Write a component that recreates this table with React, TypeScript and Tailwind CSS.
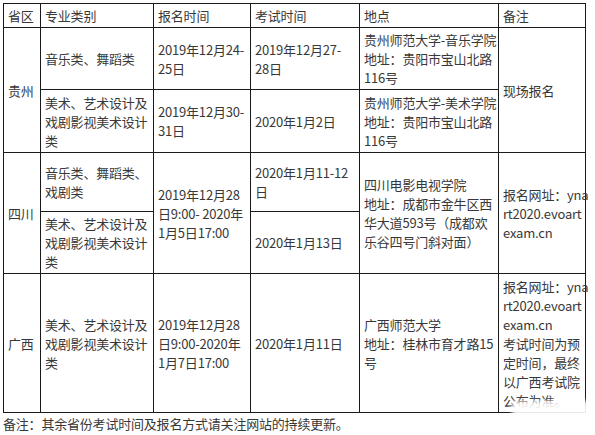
import React from 'react'

// ─── Exam schedule table ──────────────────────────────────────────────────

const td = 'border border-[#1a1a1a] px-[4px] align-middle whitespace-nowrap'

function Lines({ lines }: { lines: string[] }) {
  return (
    <>
      {lines.map((l, i) => (
        <div key={i}>{l}</div>
      ))}
    </>
  )
}

const artLines = ['美术、艺术设计及', '戏剧影视美术设计', '类']
const siteLines = ['报名网址：yna', 'rt2020.evoart', 'exam.cn']

export default function App() {
  return (
    <div
      className="relative h-[435px] w-[595px] overflow-hidden bg-white pl-[3px] pt-[3px] text-[13px] leading-[19px] tracking-[-0.2px] text-[#383838]"
      style={{ fontFamily: '"Noto Sans CJK SC", "Noto Sans", sans-serif' }}
    >
      <table className="w-[582px] table-fixed border-collapse">
        <colgroup>
          <col className="w-[37px]" />
          <col className="w-[113px]" />
          <col className="w-[97px]" />
          <col className="w-[109px]" />
          <col className="w-[139px]" />
          <col className="w-[87px]" />
        </colgroup>
        <tbody>
          <tr className="h-[24px]">
            <td className={td}>省区</td>
            <td className={td}>专业类别</td>
            <td className={td}>报名时间</td>
            <td className={td}>考试时间</td>
            <td className={td}>地点</td>
            <td className={td}>备注</td>
          </tr>

          {/* 贵州 */}
          <tr className="h-[62px]">
            <td className={td} rowSpan={2}>
              贵州
            </td>
            <td className={td}>音乐类、舞蹈类</td>
            <td className={td}>
              <Lines lines={['2019年12月24-', '25日']} />
            </td>
            <td className={td}>
              <Lines lines={['2019年12月27-', '28日']} />
            </td>
            <td className={td}>
              <Lines lines={['贵州师范大学-音乐学院', '地址：贵阳市宝山北路', '116号']} />
            </td>
            <td className={td} rowSpan={2}>
              现场报名
            </td>
          </tr>
          <tr className="h-[63px]">
            <td className={td}>
              <Lines lines={artLines} />
            </td>
            <td className={td}>
              <Lines lines={['2019年12月30-', '31日']} />
            </td>
            <td className={td}>2020年1月2日</td>
            <td className={td}>
              <Lines lines={['贵州师范大学-美术学院', '地址：贵阳市宝山北路', '116号']} />
            </td>
          </tr>

          {/* 四川 */}
          <tr className="h-[59px]">
            <td className={td} rowSpan={2}>
              四川
            </td>
            <td className={td}>
              <Lines lines={['音乐类、舞蹈类、', '戏剧类']} />
            </td>
            <td className={td} rowSpan={2}>
              <Lines lines={['2019年12月28', '日9:00- 2020年', '1月5日17:00']} />
            </td>
            <td className={td}>
              <Lines lines={['2020年1月11-12', '日']} />
            </td>
            <td className={td} rowSpan={2}>
              <Lines lines={['四川电影电视学院', '地址：成都市金牛区西', '华大道593号（成都欢', '乐谷四号门斜对面）']} />
            </td>
            <td className={td} rowSpan={2}>
              <Lines lines={siteLines} />
            </td>
          </tr>
          <tr className="h-[62px]">
            <td className={td}>
              <Lines lines={artLines} />
            </td>
            <td className={td}>2020年1月13日</td>
          </tr>

          {/* 广西 */}
          <tr className="h-[139px]">
            <td className={td}>广西</td>
            <td className={td}>
              <Lines lines={artLines} />
            </td>
            <td className={td}>
              <Lines lines={['2019年12月28', '日9:00-2020年', '1月7日17:00']} />
            </td>
            <td className={td}>2020年1月11日</td>
            <td className={td}>
              <Lines lines={['广西师范大学', '地址：桂林市育才路15', '号']} />
            </td>
            <td className={td}>
              <Lines lines={[...siteLines, '考试时间为预', '定时间，最终', '以广西考试院', '公布为准。']} />
            </td>
          </tr>
        </tbody>
      </table>

      <div className="leading-[22px]">备注：其余省份考试时间及报名方式请关注网站的持续更新。</div>

      {/* watermark smear in the bottom-right corner */}
      <div className="absolute left-[512px] top-[401px] h-[34px] w-[83px] bg-white/90 blur-[2px]" />
    </div>
  )
}
